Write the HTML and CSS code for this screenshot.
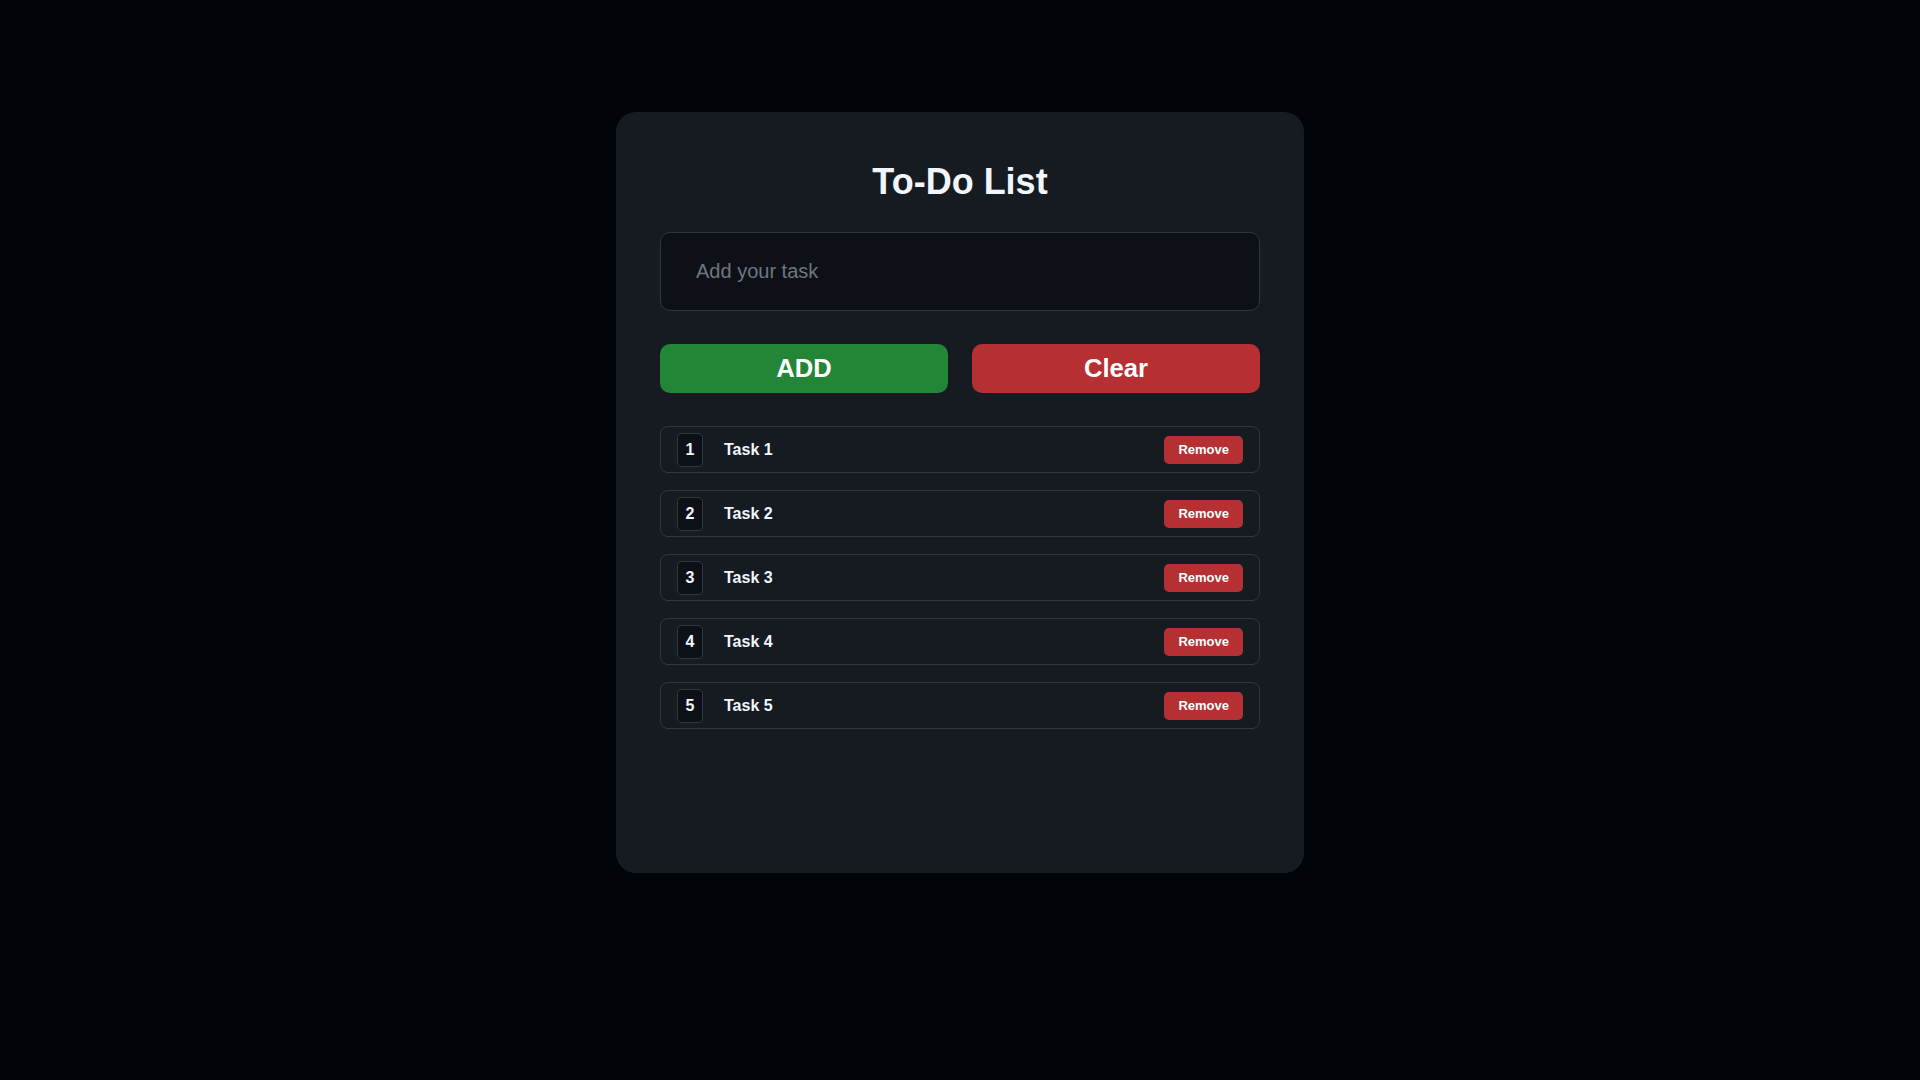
FILE: index.html
```html
<!DOCTYPE html>
<html lang="en">
<head>
<meta charset="utf-8">
<title>To-Do List</title>
<link rel="stylesheet" href="styles.css">
</head>
<body>
  <main class="card">
    <h1 class="title">To-Do List</h1>
    <input class="task-input" type="text" placeholder="Add your task">
    <div class="actions">
      <button class="btn btn-add">ADD</button>
      <button class="btn btn-clear">Clear</button>
    </div>
    <ul class="task-list">
      <li class="task"><span class="num">1</span><span class="task-name">Task 1</span><button class="remove">Remove</button></li>
      <li class="task"><span class="num">2</span><span class="task-name">Task 2</span><button class="remove">Remove</button></li>
      <li class="task"><span class="num">3</span><span class="task-name">Task 3</span><button class="remove">Remove</button></li>
      <li class="task"><span class="num">4</span><span class="task-name">Task 4</span><button class="remove">Remove</button></li>
      <li class="task"><span class="num">5</span><span class="task-name">Task 5</span><button class="remove">Remove</button></li>
    </ul>
  </main>
</body>
</html>
```
FILE: styles.css
```css
* { box-sizing: border-box; }

html, body {
  margin: 0;
  padding: 0;
  background: #010409;
  font-family: "Liberation Sans", Arial, sans-serif;
  color: #e6edf3;
}

body {
  min-height: 1080px;
}

.card {
  width: 688px;
  height: 761px;
  margin: 112px auto 0;
  padding: 50px 44px 0;
  background: #161b22;
  border-radius: 20px;
  display: flex;
  flex-direction: column;
}

.title {
  margin: 0 0 30px;
  font-size: 36px;
  line-height: 40px;
  font-weight: 700;
  text-align: center;
  color: #f0f6fc;
}

.task-input {
  display: block;
  width: 100%;
  height: 79px;
  margin: 0 0 33px;
  padding: 0 35px;
  background: #0d1117;
  border: 1px solid #30363d;
  border-radius: 10px;
  font-family: inherit;
  font-size: 20px;
  color: #e6edf3;
  outline: none;
}

.task-input::placeholder {
  color: #6e7681;
}

.actions {
  display: grid;
  grid-template-columns: 1fr 1fr;
  gap: 24px;
  margin-bottom: 33px;
}

.btn {
  height: 49px;
  border: none;
  border-radius: 10px;
  font-family: inherit;
  font-size: 25.6px;
  font-weight: 700;
  color: #ffffff;
  cursor: pointer;
}

.btn-add { background: #238636; }
.btn-clear { background: #b62f32; }

.task-list {
  list-style: none;
  margin: 0;
  padding: 0;
  display: flex;
  flex-direction: column;
  gap: 17px;
}

.task {
  display: flex;
  align-items: center;
  height: 47px;
  padding: 0 16px;
  border: 1px solid #30363d;
  border-radius: 8px;
  background: #161b22;
}

.num {
  width: 26px;
  height: 34px;
  display: flex;
  align-items: center;
  justify-content: center;
  background: #0d1117;
  border: 1px solid #30363d;
  border-radius: 4px;
  font-size: 16px;
  font-weight: 700;
  color: #f0f6fc;
}

.task-name {
  margin-left: 21px;
  flex: 1;
  font-size: 16px;
  font-weight: 700;
  color: #f0f6fc;
}

.remove {
  height: 28px;
  padding: 0 14px;
  border: none;
  border-radius: 5px;
  background: #b62f32;
  font-family: inherit;
  font-size: 13px;
  font-weight: 700;
  color: #ffffff;
  cursor: pointer;
}
```
